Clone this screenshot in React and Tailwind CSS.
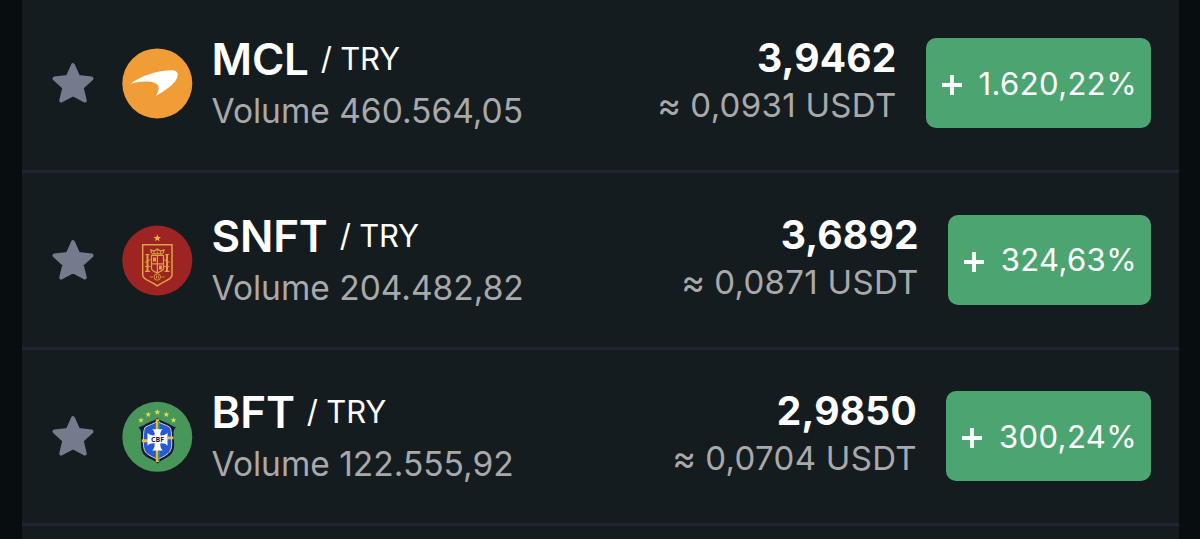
const STAR = '0,-1 0.235,-0.324 0.951,-0.309 0.38,0.124 0.588,0.809 0,0.4 -0.588,0.809 -0.38,0.124 -0.951,-0.309 -0.235,-0.324'

const pairs = [
    { symbol: 'MCL', quote: 'TRY', volume: '460.564,05', price: '3,9462', usdt: '0,0931', change: '1.620,22%', Logo: MclLogo },
    { symbol: 'SNFT', quote: 'TRY', volume: '204.482,82', price: '3,6892', usdt: '0,0871', change: '324,63%', Logo: SnftLogo },
    { symbol: 'BFT', quote: 'TRY', volume: '122.555,92', price: '2,9850', usdt: '0,0704', change: '300,24%', Logo: BftLogo },
]

function FavoriteStar() {
    return (
        <svg viewBox="0 0.8 44 44" className="w-11 h-11 shrink-0" fill="#757b8d" stroke="#757b8d" strokeWidth="4" strokeLinejoin="round">
            <path d="M22 4 L27.3 15.8 L40.5 17.3 L30.6 26.2 L33.8 39.4 L22 33 L10.2 39.4 L13.4 26.2 L3.5 17.3 L16.7 15.8 Z" />
        </svg>
    )
}

function MclLogo() {
    return (
        <svg viewBox="0 -0.7 90 90" className="w-full h-full">
            <circle cx="45.3" cy="43.7" r="35" fill="#f09d38" />
            <path d="M18.5 44 C29 36.5 43 31 58.5 30.5 C64.5 30.3 66.5 32.8 65.4 37 C63.8 43.5 54 50.5 43.8 56.3 C46.5 52 47.5 48.5 45.8 45.5 C42.5 40.5 30 41 18.5 44 Z" fill="#fff" />
        </svg>
    )
}

function SnftLogo() {
    return (
        <svg viewBox="0 0.5 90 90" className="w-full h-full">
            <circle cx="45.3" cy="45" r="35" fill="#9e2424" />
            <polygon points={STAR} transform="translate(45.3 22.7) scale(3.9)" fill="#f3b748" />
            <g fill="none" stroke="#dda23f" strokeWidth="1.2">
                <path d="M30.7 29.2 H60 V59.5 C60 64 53 65 45.3 70.3 C37.6 65 30.7 64 30.7 59.5 Z" strokeWidth="1.5" />
                <path d="M39.5 40 V53 C39.5 55.5 43 56 45.3 57.5 C47.6 56 51.5 55.5 51.5 53 V40 Z" />
                <path d="M45.4 40 V57 M39.5 48.3 H51.5" />
                <path d="M39.5 38.3 H51 M39.5 37.5 L38.8 34.5 L42 35.5 L45.3 33.5 L48.6 35.5 L52 34.5 L51.2 37.5" />
                <path d="M42 39 V35 M45.3 38 V33 M48.6 39 V35" strokeWidth="0.8" />
                <path d="M35.5 39 V55.5 M55 39 V55.5" strokeWidth="2" />
                <path d="M33.5 39 H37.5 M53 39 H57 M33 55.8 H38 M52.5 55.8 H57.5" />
                <path d="M33 47 L38.5 44 M57.5 47 L52 44 M33 51 H38.5 M52 51 H57.5" strokeWidth="0.9" />
                <circle cx="45.3" cy="61.5" r="3.2" strokeWidth="0.9" />
                <path d="M38 61.5 H41 M49.5 61.5 H52.5 M44.5 60 V63 M46.3 60 V63" strokeWidth="0.8" />
            </g>
            <path d="M41 42 H44 V46 H41 Z M47 50 H50 V54 H47 Z" fill="#dda23f" />
        </svg>
    )
}

function BftLogo() {
    return (
        <svg viewBox="0 0 90 90" className="w-full h-full">
            <circle cx="45.3" cy="44.8" r="35" fill="#489659" />
            <g fill="#dce04b">
                <polygon points={STAR} transform="translate(29 28.3) scale(3.1)" />
                <polygon points={STAR} transform="translate(36.2 22.5) scale(3.1)" />
                <polygon points={STAR} transform="translate(45.3 20.3) scale(3.3)" />
                <polygon points={STAR} transform="translate(54.3 22.5) scale(3.1)" />
                <polygon points={STAR} transform="translate(61.5 28.3) scale(3.1)" />
            </g>
            <path d="M45.3 26 C41.5 29.5 35 30 32.5 33 L26.5 35.5 C30.5 39 28.5 43 29 50 C28.5 57 30 61.5 34 64.5 C38 67.5 42.5 68 45.6 71.5 C49 68 53.5 67 57.5 63.8 C61.5 60.5 62.7 56 62 49.5 C62 43 60 38.5 64 35.5 L58.5 33 C55 30 49.5 29.5 45.3 26 Z" fill="#111b3d" />
            <path d="M45.3 29 C42 32 37 33 33.5 35 C31.5 37.5 31.5 41 31.5 48 C31 56 32.5 60 35.5 62 C39 64.5 42.7 65.5 45.5 68 C48.5 65.5 52.7 64.5 56 61.5 C59.5 58.5 60.2 54 59.5 47 C59.5 41 59.5 37.5 57.5 35 C53.5 32.5 49 32 45.3 29 Z" fill="#2859d5" stroke="#dfd3b1" strokeWidth="1" />
            <path d="M43.8 27.2 H47.2 V70 H43.8 Z" fill="#e9ba3f" />
            <path d="M45.9 29 H47.3 V69 H45.9 Z" fill="#489659" />
            <path d="M29.8 47.2 H36 V50.2 H29.8 Z M55.5 44.5 H61.5 V47.3 H55.5 Z" fill="#f0b94b" />
            <path d="M40.3 37.3 H50.7 C48.3 39.5 48 41.5 48.5 43.5 C52 43.8 53.5 43 55.5 40.8 V53.8 C53.5 51.5 51.5 51 48.5 51.3 C48 54 48.5 56.5 50.7 58.5 H40.3 C42.5 56.5 43 54 42.5 51.3 C39.5 51 37.5 51.5 35.5 53.8 V40.8 C37.5 43 39.5 43.8 42.5 43.5 C43 41.5 42.5 39.5 40.3 37.3 Z" fill="#fff" />
            <text x="45.5" y="50.3" textAnchor="middle" fontFamily="Open Sans, sans-serif" fontWeight="700" fontSize="7" fill="#172044">CBF</text>
        </svg>
    )
}

function PairRow({ pair }) {
    const { Logo } = pair
    return (
        <div className="flex items-start h-[176.5px] border-b-3 border-[#1f242e] pl-[29px] pr-7 shrink-0">
            <div className="flex items-center pt-[42.5px]">
                <FavoriteStar />
                <div className="w-[90px] h-[90px] ml-[17px]">
                    <Logo />
                </div>
            </div>

            <div className="flex flex-col pt-[40.5px] ml-[9.5px] whitespace-nowrap">
                <div className="flex items-start h-11">
                    <span className="text-[44px] leading-[44px] font-semibold tracking-[-0.2px]">{pair.symbol}</span>
                    <span className="text-[31px] leading-[43px] ml-3 tracking-[-0.2px]">/ {pair.quote}</span>
                </div>
                <p className="text-[33.5px] leading-[34px] mt-[13px] text-[#a9a9ab]">Volume {pair.volume}</p>
            </div>

            <div className="flex flex-col items-end pt-[41.5px] ml-auto whitespace-nowrap">
                <p className="text-[39px] leading-10 font-bold tracking-[0.2px]">{pair.price}</p>
                <p className="flex items-center text-[33px] leading-[34px] mt-[10px] text-[#a9a9ab] tracking-[0.3px]">
                    <span className="text-4xl leading-[34px] mr-[9px]">≈</span>
                    {pair.usdt} USDT
                </p>
            </div>

            <div className="flex items-center justify-between min-w-[203px] h-[90px] mt-[41.5px] ml-[29px] pl-[15px] pr-[14px] rounded-[10px] bg-[#4ca571] whitespace-nowrap">
                <svg viewBox="0 0 22 22" className="w-[22px] h-[22px] mt-1" stroke="#fff" strokeWidth="3.8">
                    <path d="M11 1 V21 M1 11 H21" />
                </svg>
                <span className="text-[31px] leading-[31px] ml-4 tracking-[0.4px]">{pair.change}</span>
            </div>
        </div>
    )
}

export default function App() {
    return (
        <main className="w-full h-[539px] overflow-hidden bg-[#080d0f] pl-[22px] pr-[21px] text-white font-['Inter',sans-serif]">
            <div className="flex flex-col h-[545px] -mt-[3.5px] bg-[#151c1f]">
                {pairs.map(pair => (
                    <PairRow key={pair.symbol} pair={pair} />
                ))}
            </div>
        </main>
    )
}
